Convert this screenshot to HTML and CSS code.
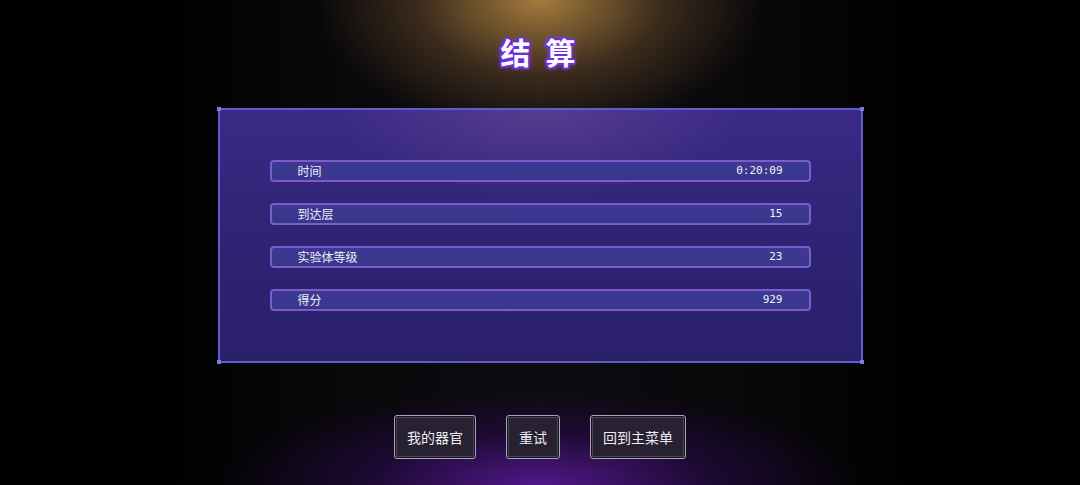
FILE: index.html
```html
<!DOCTYPE html>
<html>
<head>
  <meta charset="utf-8">
  <title>结算</title>
  <link rel="stylesheet" href="styles.css">
</head>
<body>
  <div class="screen">
    <h1 class="title">结 算</h1>

    <div class="panel">
      <span class="corner tl"></span>
      <span class="corner tr"></span>
      <span class="corner bl"></span>
      <span class="corner br"></span>

      <ul class="stats">
        <li class="stat"><span>时间</span><span class="value">0:20:09</span></li>
        <li class="stat"><span>到达层</span><span class="value">15</span></li>
        <li class="stat"><span>实验体等级</span><span class="value">23</span></li>
        <li class="stat"><span>得分</span><span class="value">929</span></li>
      </ul>
    </div>

    <div class="actions">
      <button class="btn">我的器官</button>
      <button class="btn">重试</button>
      <button class="btn">回到主菜单</button>
    </div>
  </div>
</body>
</html>
```

FILE: styles.css
```css
html, body {
  margin: 0;
  padding: 0;
  height: 100%;
}

body {
  font-family: "Noto Sans CJK SC", "Noto Sans", sans-serif;
  color: #f2f0fa;
  background-color: #000;
  overflow: hidden;
}

/* gold spotlight on top, purple glow under the buttons */
.screen {
  height: 485px;
  display: flex;
  flex-direction: column;
  align-items: center;
  background:
    radial-gradient(ellipse 225px 135px at 540px 0px, rgba(172, 128, 62, 0.95), rgba(115, 82, 45, 0.45) 55%, rgba(0, 0, 0, 0) 100%),
    radial-gradient(ellipse 320px 95px at 540px 485px, rgba(88, 24, 150, 0.9), rgba(45, 10, 85, 0.5) 55%, rgba(0, 0, 0, 0) 100%),
    linear-gradient(90deg, #000 0%, #000 14%, #08070a 30%, #0e0c10 50%, #08070a 70%, #000 86%, #000 100%);
}

.title {
  margin: 0;
  padding-top: 34px;
  height: 34px;
  line-height: 34px;
  font-size: 30px;
  font-weight: 700;
  letter-spacing: 4px;
  color: #fbf8ff;
  text-shadow:
    2px 0 #6a30d4, -2px 0 #6a30d4, 0 2px #6a30d4, 0 -2px #6a30d4,
    1.5px 1.5px #6a30d4, -1.5px -1.5px #6a30d4, 1.5px -1.5px #6a30d4, -1.5px 1.5px #6a30d4,
    0 0 7px rgba(140, 80, 255, 0.8);
}

.panel {
  position: relative;
  box-sizing: border-box;
  width: 645px;
  height: 255px;
  margin-top: 40px;
  padding: 50px;
  border: 2px solid #5f5ccb;
  background:
    radial-gradient(ellipse 210px 90px at 50% 0%, rgba(115, 78, 155, 0.5), rgba(0, 0, 0, 0) 100%),
    linear-gradient(180deg, #3a2a86 0%, #2f2476 45%, #2a206a 100%);
}

.corner {
  position: absolute;
  width: 4px;
  height: 4px;
  background: #7a7ae0;
}

.corner.tl { top: -3px; left: -3px; }
.corner.tr { top: -3px; right: -3px; }
.corner.bl { bottom: -3px; left: -3px; }
.corner.br { bottom: -3px; right: -3px; }

.stats {
  list-style-type: none;
  margin: 0;
  padding: 0;
  display: flex;
  flex-direction: column;
  gap: 21px;
}

.stat {
  box-sizing: border-box;
  height: 22px;
  display: flex;
  align-items: center;
  justify-content: space-between;
  padding: 0 26px 1px 26px;
  border: 2px solid #7c5ccb;
  border-radius: 4px;
  background: linear-gradient(180deg, #3d3992 0%, #38378c 100%);
  font-size: 12px;
  color: #f0eef8;
}

.value {
  font-family: "DejaVu Sans Mono", "Liberation Mono", monospace;
  font-size: 11px;
  color: #f4f2fb;
}

.actions {
  margin-top: 52px;
  display: flex;
  gap: 30px;
}

.btn {
  box-sizing: border-box;
  height: 44px;
  padding: 0 12px;
  border: 1px solid #a9a6b6;
  border-radius: 3px;
  background-color: #272131;
  box-shadow: inset 0 0 0 1px #16121e, inset 0 0 0 2px #4a4458;
  font-family: inherit;
  font-size: 14px;
  color: #ecebf2;
}
```
